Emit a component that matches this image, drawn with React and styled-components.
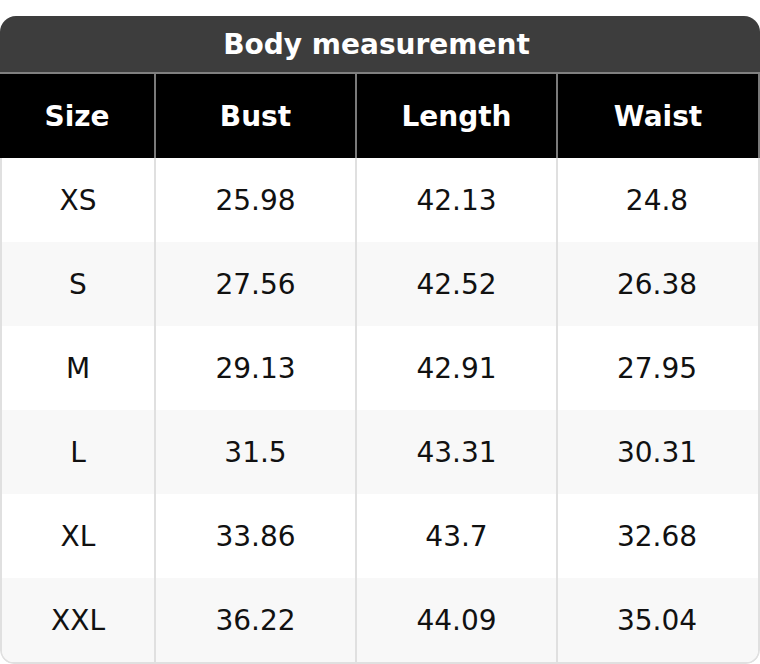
import React from "react";
import styled, { createGlobalStyle } from "styled-components";

const Global = createGlobalStyle`
  html, body { margin: 0; padding: 0; background: #ffffff; }
  body { font-family: "DejaVu Sans", Verdana, sans-serif; }
`;

const Card = styled.div`
  margin-top: 16px;
  width: 760px;
  border-radius: 16px 16px 14px 14px;
  overflow: hidden;
`;

const Title = styled.div`
  height: 56px;
  background: #3d3d3d;
  color: #ffffff;
  font-weight: bold;
  font-size: 28px;
  display: flex;
  align-items: center;
  justify-content: center;
  padding-right: 7px;
  border-bottom: 2px solid #808080;
`;

const HeadRow = styled.div`
  display: grid;
  grid-template-columns: 154px 201px 201px 202px;
  height: 84px;
  background: #000000;
  border-right: 2px solid #7a7a7a;
`;

const HeadCell = styled.div`
  display: flex;
  align-items: center;
  justify-content: center;
  color: #ffffff;
  font-weight: bold;
  font-size: 28px;
  border-left: ${(p) => (p.$first ? "none" : "2px solid #7a7a7a")};
`;

const Body = styled.div`
  border: 2px solid #e0e0e0;
  border-top: none;
  border-radius: 0 0 14px 14px;
  overflow: hidden;
`;

const Row = styled.div`
  display: grid;
  grid-template-columns: 152px 201px 201px 200px;
  height: 84px;
  background: ${(p) => (p.$alt ? "#f8f8f8" : "#ffffff")};
`;

const Cell = styled.div`
  display: flex;
  align-items: center;
  justify-content: center;
  color: #111111;
  font-size: 28px;
  border-left: ${(p) => (p.$first ? "none" : "2px solid #e0e0e0")};
`;

const headers = ["Size", "Bust", "Length", "Waist"];
const rows = [
  ["XS", "25.98", "42.13", "24.8"],
  ["S", "27.56", "42.52", "26.38"],
  ["M", "29.13", "42.91", "27.95"],
  ["L", "31.5", "43.31", "30.31"],
  ["XL", "33.86", "43.7", "32.68"],
  ["XXL", "36.22", "44.09", "35.04"],
];

export default function App() {
  return (
    <>
      <Global />
      <Card>
        <Title>Body measurement</Title>
        <HeadRow>
          {headers.map((h, i) => (
            <HeadCell key={h} $first={i === 0}>
              {h}
            </HeadCell>
          ))}
        </HeadRow>
        <Body>
          {rows.map((r, ri) => (
            <Row key={r[0]} $alt={ri % 2 === 1}>
              {r.map((v, i) => (
                <Cell key={i} $first={i === 0}>
                  {v}
                </Cell>
              ))}
            </Row>
          ))}
        </Body>
      </Card>
    </>
  );
}
